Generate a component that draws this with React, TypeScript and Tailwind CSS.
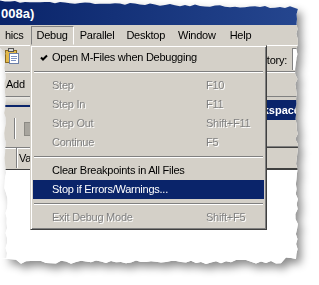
import React from "react";
import clsx from "clsx";

const FONT = "font-['Liberation_Sans',Arial,sans-serif]";

// torn-paper outline of the cut-out screenshot (deterministic jitter)
function tornEdge(): string {
  const w = 300;
  const h = 268;
  let seed = 11;
  const rnd = () => {
    seed = (seed * 16807) % 2147483647;
    return seed / 2147483647;
  };
  const pts: [number, number][] = [];
  for (let x = 0; x <= w - 4; x += 5) pts.push([x, 0.5 + (x / w) * 6 + rnd() * 2.2]);
  for (let y = 9; y <= h - 10; y += 5) pts.push([w - 5 + rnd() * 3, y]);
  for (let x = w - 4; x >= 0; x -= 5) {
    const edge = x < 20 || x > 285 ? -3 : 0;
    pts.push([x, h - 8 + edge + rnd() * 4]);
  }
  for (let y = h - 10; y > 0; y -= 5) {
    const x = y < 52 ? 0 : y > 190 ? 5.5 + rnd() * 2 : 4 + rnd() * 2;
    pts.push([x, y]);
  }
  return `polygon(${pts.map(([x, y]) => `${x.toFixed(1)}px ${y.toFixed(1)}px`).join(",")})`;
}

const CLIP = tornEdge();

type ItemProps = {
  label: string;
  shortcut?: string;
  disabled?: boolean;
  active?: boolean;
  checked?: boolean;
};

function Item({ label, shortcut, disabled, active, checked }: ItemProps) {
  return (
    <div
      className={clsx(
        "relative flex items-center h-[19px] pl-[19px] whitespace-nowrap",
        active && "bg-[#0a246a] text-white",
        disabled && "text-[#808080] [text-shadow:1px_1px_0_#ffffff]"
      )}
    >
      {checked && (
        <svg className="absolute left-[7px] top-[6px]" width="8" height="8" viewBox="0 0 8 8">
          <path d="M1 3.5 L3 5.5 L7 1.5" stroke="#000" strokeWidth="2" fill="none" />
        </svg>
      )}
      <span className="w-[154px]">{label}</span>
      {shortcut && <span>{shortcut}</span>}
    </div>
  );
}

function Sep() {
  return (
    <div className="h-[9px] pt-[4px] px-px">
      <div className="h-px bg-[#808080]" />
      <div className="h-px bg-white" />
    </div>
  );
}

function PasteIcon() {
  return (
    <svg width="14" height="16" viewBox="0 0 14 16">
      <rect x="0.5" y="2.5" width="11" height="12" fill="#e3b94a" stroke="#8a6a20" />
      <rect x="4.5" y="5.5" width="9" height="10" fill="#ffffff" stroke="#6b7fa8" />
      <path d="M6 8.5h6M6 10.5h6M6 12.5h5" stroke="#7d93c4" />
      <rect x="3.5" y="0.5" width="5" height="3" fill="#d8d8d8" stroke="#555" />
    </svg>
  );
}

export default function App() {
  return (
    <div className={clsx("w-[319px] h-[285px] bg-white overflow-hidden text-[11px] tracking-[-0.25px] text-black", FONT)}>
      <div className="[filter:drop-shadow(4px_5px_4px_rgba(0,0,0,0.45))]">
        <div className="relative w-[300px] h-[268px] bg-white flex flex-col" style={{ clipPath: CLIP }}>
          {/* title bar */}
          <div className="h-[25px] shrink-0 bg-gradient-to-r from-[#0a246a] to-[#25468f] flex items-center pt-[3px]">
            <span className="text-white font-bold text-[13px] tracking-normal pl-px">008a)</span>
          </div>

          {/* menu bar */}
          <div className="h-[20px] shrink-0 bg-[#d4d0c8] flex items-center overflow-hidden whitespace-nowrap">
            <span className="pl-[5px] pr-[7px]">hics</span>
            <span className="h-[19px] mt-px flex items-center px-[5px] border border-t-[#808080] border-l-[#808080] border-r-white border-b-transparent">
              Debug
            </span>
            <span className="px-[6px]">Parallel</span>
            <span className="px-[6px]">Desktop</span>
            <span className="px-[7px]">Window</span>
            <span className="px-[7px]">Help</span>
          </div>

          {/* toolbar */}
          <div className="h-px bg-white shrink-0" />
          <div className="h-[25px] shrink-0 bg-[#d4d0c8] flex items-start justify-between">
            <div className="ml-[5px] mt-[2px]">
              <PasteIcon />
            </div>
            <div className="flex items-center gap-[5px] mt-[2px] whitespace-nowrap">
              <span className="mt-[3px]">Current Directory:</span>
              <div className="w-[8px] h-[22px] bg-white border-t border-l border-t-[#808080] border-l-[#808080] pl-[3px] pt-[4px]">
                L
              </div>
            </div>
          </div>
          <div className="h-px bg-[#808080] shrink-0" />
          <div className="h-px bg-white shrink-0" />

          {/* shortcuts */}
          <div className="h-[23px] shrink-0 bg-[#d4d0c8] flex items-center pl-[6px]">Add</div>
          <div className="h-px bg-[#808080] shrink-0" />

          {/* panels */}
          <div className="h-[72px] shrink-0 flex bg-[#d4d0c8]">
            <div className="w-[240px] flex flex-col">
              <div className="h-[8px] bg-gradient-to-b from-[#ebe9e4] to-[#c6c3bb]" />
              <div className="h-[2px] bg-[#0a246a]" />
              <div className="h-[40px] flex items-center gap-[8px] pl-[14px]">
                <div className="flex h-[21px] mt-[2px]">
                  <div className="w-px bg-[#808080]" />
                  <div className="w-px bg-white" />
                </div>
                <div className="w-[14px] h-[14px] mt-[3px] bg-[#a8a59e] border border-[#8c8a84]" />
              </div>
              <div className="h-px bg-[#808080]" />
              <div className="h-[20px] flex">
                <div className="w-[17px] border-r border-r-[#808080] shadow-[inset_0_1px_0_#fff]" />
                <div className="flex-1 flex items-center pl-[2px] shadow-[inset_1px_1px_0_#fff]">Value</div>
              </div>
            </div>
            <div className="flex-1 flex flex-col">
              <div className="h-[3px]" />
              <div className="h-[20px] bg-[#0a246a] flex items-center pl-[5px] text-white font-bold whitespace-nowrap tracking-normal">
                Workspace
              </div>
              <div className="h-[26px]" />
              <div className="h-px bg-[#808080]" />
              <div className="h-px bg-[#404040]" />
              <div className="h-[20px]" />
              <div className="h-px bg-[#404040]" />
            </div>
          </div>
          <div className="h-px bg-[#404040] shrink-0" />
          <div className="flex-1 bg-white" />

          {/* open Debug menu */}
          <div className="absolute left-[30px] top-[45px] w-[237px] bg-[#d4d0c8] p-[2px] border border-t-[#d4d0c8] border-l-[#d4d0c8] border-r-[#404040] border-b-[#404040] shadow-[inset_1px_1px_0_#ffffff,inset_-1px_-1px_0_#808080]">
            <Item label="Open M-Files when Debugging" checked />
            <Sep />
            <Item label="Step" shortcut="F10" disabled />
            <Item label="Step In" shortcut="F11" disabled />
            <Item label="Step Out" shortcut="Shift+F11" disabled />
            <Item label="Continue" shortcut="F5" disabled />
            <Sep />
            <Item label="Clear Breakpoints in All Files" />
            <Item label="Stop if Errors/Warnings..." active />
            <Sep />
            <Item label="Exit Debug Mode" shortcut="Shift+F5" disabled />
          </div>
        </div>
      </div>
    </div>
  );
}
